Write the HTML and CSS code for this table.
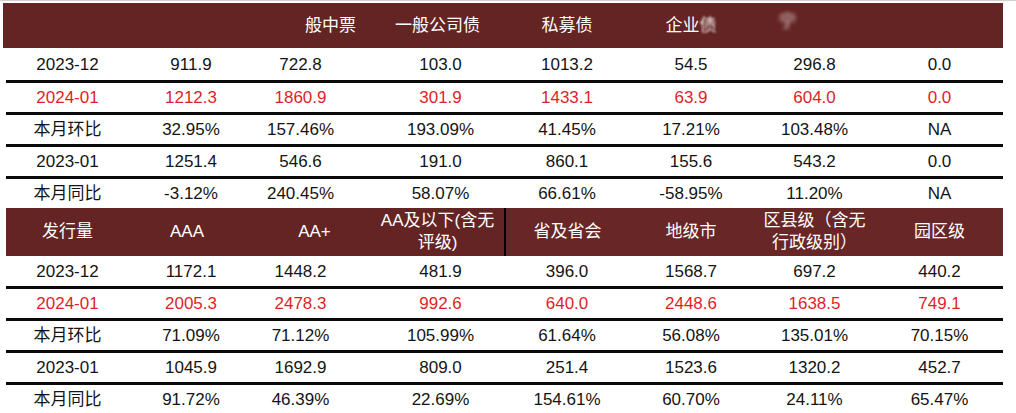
FILE: index.html
```html
<!DOCTYPE html>
<html lang="zh">
<head>
<meta charset="utf-8">
<link rel="stylesheet" href="styles.css">
</head>
<body>
<div class="sheet">
  <div class="head head-top">
    <div></div>
    <div></div>
    <div class="h-zp">般中票</div>
    <div>一般公司债</div>
    <div>私募债</div>
    <div>企业<span class="fade">债</span></div>
    <div class="h-blur"><span class="blob">宁</span></div>
    <div></div>
  </div>
  <div class="row first tall">
    <div>2023-12</div><div>911.9</div><div>722.8</div><div>103.0</div><div>1013.2</div><div>54.5</div><div>296.8</div><div>0.0</div>
  </div>
  <div class="row red">
    <div>2024-01</div><div>1212.3</div><div>1860.9</div><div>301.9</div><div>1433.1</div><div>63.9</div><div>604.0</div><div>0.0</div>
  </div>
  <div class="row">
    <div>本月环比</div><div>32.95%</div><div>157.46%</div><div>193.09%</div><div>41.45%</div><div>17.21%</div><div>103.48%</div><div>NA</div>
  </div>
  <div class="row">
    <div>2023-01</div><div>1251.4</div><div>546.6</div><div>191.0</div><div>860.1</div><div>155.6</div><div>543.2</div><div>0.0</div>
  </div>
  <div class="row">
    <div>本月同比</div><div>-3.12%</div><div>240.45%</div><div>58.07%</div><div>66.61%</div><div>-58.95%</div><div>11.20%</div><div>NA</div>
  </div>

  <div class="head head-second">
    <div>发行量</div>
    <div>AAA</div>
    <div class="h-aap">AA+</div>
    <div class="two">AA及以下(含无<br>评级)</div>
    <div class="split">省及省会</div>
    <div class="alt">地级市</div>
    <div class="alt two">区县级（含无<br>行政级别）</div>
    <div class="alt">园区级</div>
  </div>
  <div class="row first">
    <div>2023-12</div><div>1172.1</div><div>1448.2</div><div>481.9</div><div>396.0</div><div>1568.7</div><div>697.2</div><div>440.2</div>
  </div>
  <div class="row red">
    <div>2024-01</div><div>2005.3</div><div>2478.3</div><div>992.6</div><div>640.0</div><div>2448.6</div><div>1638.5</div><div>749.1</div>
  </div>
  <div class="row">
    <div>本月环比</div><div>71.09%</div><div>71.12%</div><div>105.99%</div><div>61.64%</div><div>56.08%</div><div>135.01%</div><div>70.15%</div>
  </div>
  <div class="row">
    <div>2023-01</div><div>1045.9</div><div>1692.9</div><div>809.0</div><div>251.4</div><div>1523.6</div><div>1320.2</div><div>452.7</div>
  </div>
  <div class="row">
    <div>本月同比</div><div>91.72%</div><div>46.39%</div><div>22.69%</div><div>154.61%</div><div>60.70%</div><div>24.11%</div><div>65.47%</div>
  </div>
</div>
</body>
</html>
```

FILE: styles.css
```css
html, body {
  margin: 0;
  padding: 0;
  background: #ffffff;
}

body {
  font-family: "Liberation Sans", "Noto Sans CJK SC", sans-serif;
  font-size: 17px;
  color: #141414;
  border-top: 1px solid #d4d0d0;
  padding-top: 2px;
}

.sheet {
  margin-left: 6px;
  width: 997px;
}

.head,
.row {
  display: grid;
  grid-template-columns: 123px 116px 125px 135px 124px 124px 123px 127px;
  text-align: center;
}

.head {
  background: #642423;
  color: #ffffff;
}

.head > div {
  display: flex;
  align-items: center;
  justify-content: center;
  line-height: 22px;
}

.head-top {
  height: 45px;
  margin-left: -3px;
  padding-left: 3px;
}

.head-top .h-zp {
  padding-left: 46px;
}

.head-top .h-blur {
  justify-content: flex-start;
  padding-left: 26px;
}

.fade {
  filter: blur(0.9px);
  opacity: 0.9;
}

.blob {
  display: inline-block;
  filter: blur(2px);
  color: #f2e8e8;
  font-size: 17px;
  transform: translateY(-4px);
}

.head-second {
  height: 48px;
}

.head-second .h-aap {
  padding-left: 14px;
}

.head-second .split {
  border-left: 2px solid #000000;
  margin-left: -1px;
}

.head-second .alt,
.head-second .split {
  background: #682726;
}

.row {
  height: 32px;
  box-sizing: border-box;
  border-top: 3px solid #0a0a0a;
  align-items: center;
  line-height: 29px;
}

.row.first {
  border-top: none;
  height: 30px;
}

.row.first.tall {
  height: 32px;
}

.row.red {
  color: #de1f2a;
}

.row > :nth-child(2) {
  padding-left: 8px;
}

.row > :nth-child(3) {
  padding-right: 14px;
}

.row > :nth-child(4) {
  padding-left: 6px;
}
```
